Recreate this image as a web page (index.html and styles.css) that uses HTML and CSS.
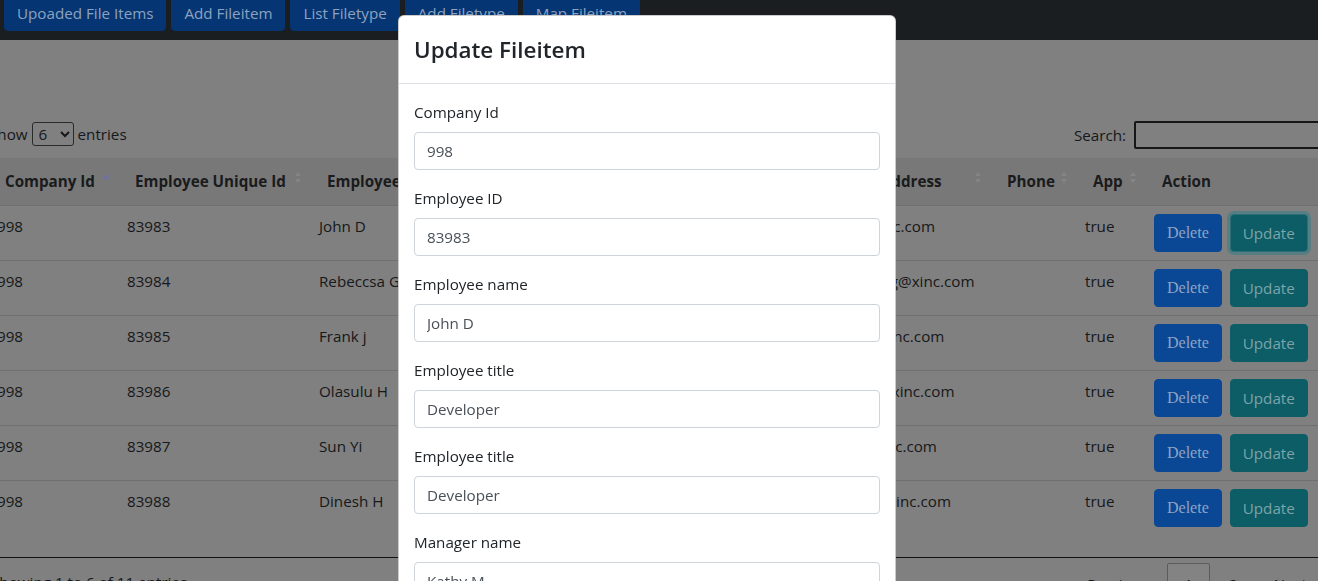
FILE: index.html
```html
<!DOCTYPE html>
<html lang="en">
<head>
<meta charset="utf-8">
<title>Update Fileitem</title>
<link rel="stylesheet" href="styles.css">
</head>
<body>
<nav class="navbar">
  <button class="nav-btn">Upoaded File Items</button>
  <button class="nav-btn">Add Fileitem</button>
  <button class="nav-btn">List Filetype</button>
  <button class="nav-btn">Add Filetype</button>
  <button class="nav-btn">Map Fileitem</button>
</nav>

<main class="page">
  <div class="controls">
    <label class="length">Show <select class="length-select"><option>6</option></select> entries</label>
    <label class="search">Search: <input class="search-input" type="text"></label>
  </div>

  <div class="table-wrap">
    <table class="grid">
      <colgroup>
        <col class="c-company"><col class="c-unique"><col class="c-name"><col class="c-title"><col class="c-manager"><col class="c-email"><col class="c-phone"><col class="c-app"><col class="c-action">
      </colgroup>
      <thead>
        <tr>
          <th class="sort-asc">Company Id</th>
          <th class="sort-both">Employee Unique Id</th>
          <th class="sort-both">Employee Name</th>
          <th class="sort-both">Employee Title</th>
          <th class="sort-both">Manager Name</th>
          <th class="sort-both">Email Address</th>
          <th class="sort-both">Phone</th>
          <th class="sort-both">App</th>
          <th class="sort-both">Action</th>
        </tr>
      </thead>
      <tbody>
        <tr><td>998</td><td>83983</td><td>John D</td><td>Developer</td><td>Kathy M</td><td>john@xinc.com</td><td></td><td>true</td><td><div class="actions"><button class="btn-delete">Delete</button><button class="btn-update is-focused">Update</button></div></td></tr>
        <tr><td>998</td><td>83984</td><td>Rebeccsa G</td><td>Developer</td><td>Kathy M</td><td>rebeccsag@xinc.com</td><td></td><td>true</td><td><div class="actions"><button class="btn-delete">Delete</button><button class="btn-update">Update</button></div></td></tr>
        <tr><td>998</td><td>83985</td><td>Frank j</td><td>Developer</td><td>Kathy M</td><td>frankj@xinc.com</td><td></td><td>true</td><td><div class="actions"><button class="btn-delete">Delete</button><button class="btn-update">Update</button></div></td></tr>
        <tr><td>998</td><td>83986</td><td>Olasulu H</td><td>Developer</td><td>Kathy M</td><td>olasulu@xinc.com</td><td></td><td>true</td><td><div class="actions"><button class="btn-delete">Delete</button><button class="btn-update">Update</button></div></td></tr>
        <tr><td>998</td><td>83987</td><td>Sun Yi</td><td>Developer</td><td>Kathy M</td><td>suny@xinc.com</td><td></td><td>true</td><td><div class="actions"><button class="btn-delete">Delete</button><button class="btn-update">Update</button></div></td></tr>
        <tr><td>998</td><td>83988</td><td>Dinesh H</td><td>Developer</td><td>Kathy M</td><td>dinesh@xinc.com</td><td></td><td>true</td><td><div class="actions"><button class="btn-delete">Delete</button><button class="btn-update">Update</button></div></td></tr>
      </tbody>
    </table>
  </div>

  <div class="table-footer">
    <div class="info">Showing 1 to 6 of 11 entries</div>
    <div class="paging">
      <span class="page-btn">Previous</span>
      <span class="page-btn current">1</span>
      <span class="page-btn">2</span>
      <span class="page-btn">Next</span>
    </div>
  </div>
</main>

<div class="modal">
  <div class="modal-header">
    <h3 class="modal-title">Update Fileitem</h3>
  </div>
  <form class="modal-body">
    <div class="field">
      <label class="field-label">Company Id</label>
      <input class="field-input" type="text" value="998">
    </div>
    <div class="field">
      <label class="field-label">Employee ID</label>
      <input class="field-input" type="text" value="83983">
    </div>
    <div class="field">
      <label class="field-label">Employee name</label>
      <input class="field-input" type="text" value="John D">
    </div>
    <div class="field">
      <label class="field-label">Employee title</label>
      <input class="field-input" type="text" value="Developer">
    </div>
    <div class="field">
      <label class="field-label">Employee title</label>
      <input class="field-input" type="text" value="Developer">
    </div>
    <div class="field">
      <label class="field-label">Manager name</label>
      <input class="field-input" type="text" value="Kathy M">
    </div>
  </form>
</div>
</body>
</html>
```

FILE: styles.css
```css
* { box-sizing: border-box; }

html, body {
  margin: 0;
  width: 1318px;
  height: 581px;
  overflow: hidden;
}

body {
  font-family: "Open Sans", "Noto Sans", sans-serif;
  font-size: 15.2px;
  line-height: 24px;
  color: #161819;
  background: #808080;
}

/* ---------- navbar ---------- */
.navbar {
  height: 40px;
  background: #1b1e21;
  display: flex;
  align-items: flex-end;
  gap: 5px;
  padding: 0 0 9px 4px;
  overflow: hidden;
}

.nav-btn {
  flex: none;
  font: inherit;
  line-height: 24px;
  color: #8da2c0;
  background: #053673;
  border: 1px solid #053673;
  border-radius: 4px;
  padding: 7px 12px 5px;
}

/* ---------- page behind the modal ---------- */
.page {
  margin-left: -13px;
  width: 1345px;
}

.controls {
  display: flex;
  justify-content: space-between;
  align-items: center;
  height: 28px;
  margin-top: 81px;
  padding-left: 2px;
}

.length {
  display: flex;
  align-items: center;
  gap: 4px;
  margin-top: -3px;
}

.length-select {
  font: inherit;
  height: 24px;
  width: 42px;
  background: transparent;
  color: #161819;
  border: 1px solid #2a2a2a;
  border-radius: 3px;
  padding: 0 2px;
}

.search {
  display: flex;
  align-items: center;
  gap: 8px;
}

.search-input {
  width: 198px;
  height: 28px;
  background: transparent;
  border: 2px solid #161616;
  border-radius: 2px;
}

.table-wrap {
  margin-top: 9px;
  padding-bottom: 22px;
  border-bottom: 1px solid #121212;
}

.grid {
  width: 1345px;
  table-layout: fixed;
  border-collapse: collapse;
}

.c-company { width: 130px; }
.c-unique { width: 192px; }
.c-name { width: 211px; }
.c-title { width: 140px; }
.c-manager { width: 157px; }
.c-email { width: 172px; }
.c-phone { width: 86px; }
.c-app { width: 69px; }
.c-action { width: 188px; }

.grid th {
  position: relative;
  background: #787878;
  text-align: left;
  font-weight: 700;
  color: #1a1b1c;
  padding: 11px 18px 12px;
  white-space: nowrap;
  overflow: hidden;
}

.sort-asc::before,
.sort-both::before,
.sort-both::after {
  content: "";
  position: absolute;
  right: 8px;
  width: 0;
  height: 0;
  border-left: 3.5px solid transparent;
  border-right: 3.5px solid transparent;
}

.sort-asc::before {
  top: 16px;
  border-bottom: 5px solid #6c70ac;
}

.sort-both::before {
  top: 14px;
  border-bottom: 4px solid #858585;
}

.sort-both::after {
  top: 21px;
  border-top: 4px solid #858585;
}

.grid td {
  padding: 8px 10px;
  vertical-align: top;
  border-top: 1px solid #707070;
  white-space: nowrap;
  overflow: hidden;
}

.actions {
  display: flex;
  gap: 8px;
}

.btn-delete,
.btn-update {
  line-height: 24px;
  height: 38px;
  padding: 6px 12px;
  border-radius: 4px;
}

.btn-delete {
  font-family: "Liberation Serif", "Times New Roman", serif;
  font-size: 16px;
  color: #8ea4c2;
  background: #0a4896;
  border: 1px solid #0a4896;
}

.btn-update {
  font-family: "Open Sans", "Noto Sans", sans-serif;
  font-size: 15.2px;
  color: #7ea3a8;
  background: #0c5d66;
  border: 1px solid #0c5d66;
}

.btn-update.is-focused {
  border-color: #2d6f76;
  box-shadow: 0 0 0 3px rgba(74, 126, 131, 0.75);
}

.table-footer {
  display: flex;
  justify-content: space-between;
  align-items: flex-start;
}

.info {
  padding: 12px 0 0 4px;
}

.paging {
  display: flex;
  gap: 2px;
  padding-top: 5px;
  margin-right: 8px;
}

.page-btn {
  padding: 8px 16px;
  border: 1px solid transparent;
  border-radius: 2px;
  line-height: 24px;
}

.page-btn.current {
  border-color: #5c5c5c;
  background: #838383;
}

/* ---------- modal ---------- */
.modal {
  position: fixed;
  top: 15px;
  left: 398px;
  width: 498px;
  height: 600px;
  background: #fff;
  border: 1px solid rgba(0, 0, 0, 0.2);
  border-radius: 6px;
  color: #212529;
}

.modal-header {
  padding: 16px 15px 15px;
  border-bottom: 1px solid #dee2e6;
}

.modal-title {
  margin: 0;
  font-size: 22.4px;
  line-height: 36px;
  font-weight: 600;
  color: #212529;
}

.modal-body {
  margin: 0;
  padding: 16px 15px;
}

.field {
  margin-bottom: 16px;
}

.field-label {
  display: block;
  margin-bottom: 8px;
  line-height: 24px;
}

.field-input {
  display: block;
  width: 100%;
  height: 38px;
  padding: 6px 12px;
  font: inherit;
  line-height: 24px;
  color: #495057;
  background: #fff;
  border: 1px solid #ced4da;
  border-radius: 4px;
}
```
